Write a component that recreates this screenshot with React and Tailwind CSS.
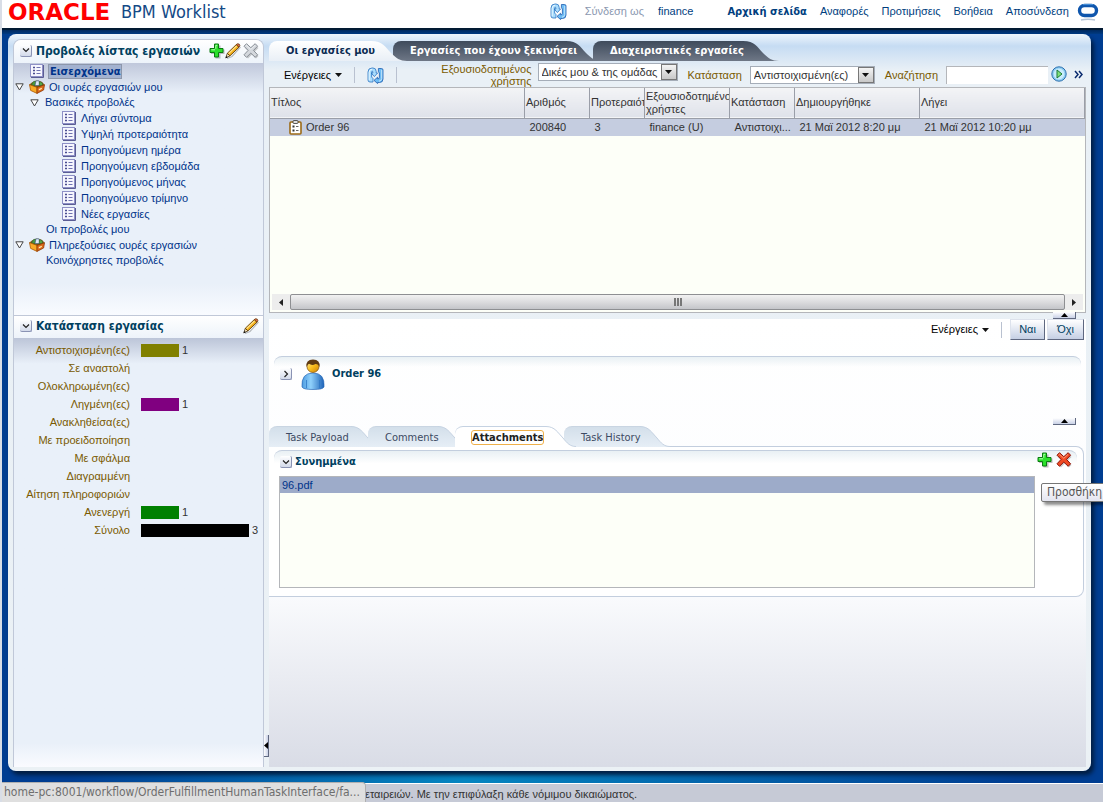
import { useState } from "react";
import clsx from "clsx";

const treeItems = [
  { label: "Λήγει σύντομα" },
  { label: "Υψηλή προτεραιότητα" },
  { label: "Προηγούμενη ημέρα" },
  { label: "Προηγούμενη εβδομάδα" },
  { label: "Προηγούμενος μήνας" },
  { label: "Προηγούμενο τρίμηνο" },
  { label: "Νέες εργασίες" },
];

const statusRows = [
  { label: "Αντιστοιχισμένη(ες)", count: 1, color: "bg-[#808000]" },
  { label: "Σε αναστολή" },
  { label: "Ολοκληρωμένη(ες)" },
  { label: "Ληγμένη(ες)", count: 1, color: "bg-[#800080]" },
  { label: "Ανακληθείσα(ες)" },
  { label: "Με προειδοποίηση" },
  { label: "Με σφάλμα" },
  { label: "Διαγραμμένη" },
  { label: "Αίτηση πληροφοριών" },
  { label: "Ανενεργή", count: 1, color: "bg-[#008000]" },
  { label: "Σύνολο", count: 3, color: "bg-black" },
];

const BAR_WIDTHS = { 1: 38, 3: 108 };

function RefreshIcon() {
  return (
    <svg width="17" height="17" viewBox="0 0 17 17" className="block">
      <path d="M1 13 V5 Q1 1 5 1 H6 Q9.2 1 9.2 4.5 V6 H10.6 L7.4 9.6 L4.2 6 H5.8 V5 Q5.8 4.2 5.2 4.2 Q4.6 4.2 4.6 5.4 V10 L6 11.6 V15 H3 Q1 15 1 13 Z" fill="#a9dcfc" stroke="#2b74c2" strokeWidth="0.8" />
      <path d="M2.2 13.2 V5.2 Q2.4 2.2 5.2 2.2" fill="none" stroke="#e8f7ff" strokeWidth="1" />
      <path d="M11.4 1.5 H14.5 Q16 1.5 16 3 V12 Q16 15.5 12.5 15.5 H10.6 V16.6 L7 13.4 L10.6 10.2 V11.8 Q12.4 12 12.4 10.4 V6 L11.4 4.8 Z" fill="#6dbcf4" stroke="#1d5cae" strokeWidth="0.8" />
      <path d="M14.7 3 V11.6 Q14.5 14 12 14.2" fill="none" stroke="#c4e6fb" strokeWidth="1" />
    </svg>
  );
}

function PlusIcon() {
  return (
    <svg width="16" height="16" viewBox="0 0 16 16">
      <path d="M6.5 2.5 H11.5 V6.5 H15.5 V11 H11.5 V15.5 H6.5 V11 H2 V6.5 H6.5 Z" fill="#000" opacity="0.25" />
      <path d="M5.5 1 H9.5 V5.5 H14 V9.5 H9.5 V14 H5.5 V9.5 H1 V5.5 H5.5 Z" fill="#2be02b" stroke="#0b7a12" strokeWidth="1" />
      <path d="M6.8 5.8 V2.3 H8.3 M2.3 6.8 H6" fill="none" stroke="#b4ffb0" strokeWidth="1" />
    </svg>
  );
}

function PencilIcon() {
  return (
    <svg width="16" height="16" viewBox="0 0 16 16">
      <path d="M2 15.5 L7 13.5 L15.5 4" fill="none" stroke="#000" strokeWidth="1.2" opacity="0.25" />
      <path d="M0.8 14.8 L2.3 10.3 L4.9 12.9 Z" fill="#f7e3b8" stroke="#3a2a10" strokeWidth="0.8" />
      <path d="M2.3 10.3 L11.3 1.6 L14 4.2 L4.9 12.9 Z" fill="#f5b21c" stroke="#5f3b08" strokeWidth="0.9" />
      <path d="M3.6 10.6 L11.6 2.9" stroke="#ffe79a" strokeWidth="1.1" />
      <path d="M11.3 1.6 Q12.6 0 14.3 1.2 Q15.6 2.7 14 4.2 Z" fill="#e2674a" stroke="#5f3b08" strokeWidth="0.8" />
      <path d="M0.6 15.2 L1.3 13 L2.7 14.4 Z" fill="#111" />
    </svg>
  );
}

function CrossIcon({ fill, stroke, light }) {
  return (
    <svg width="16" height="16" viewBox="0 0 16 16">
      <path d="M4 2.5 L8.8 6.5 L13 2.5 L15.5 5 L11.5 9 L15.5 13 L13 15.5 L9 11.5 L5 15.5 L2 13 L6.5 9 L2 5 Z" fill="#000" opacity="0.2" />
      <path d="M3.5 0.7 L7.8 4.7 L12.2 0.7 L14.6 3.2 L10.5 7.4 L14.6 11.8 L12.2 14.3 L7.8 10.1 L3.5 14.3 L1 11.8 L5.1 7.4 L1 3.2 Z" fill={fill} stroke={stroke} strokeWidth="1" />
      <path d="M2.6 3.2 L3.5 2.3 L7.8 6.3 L12 2.4" fill="none" stroke={light} strokeWidth="0.8" />
    </svg>
  );
}

function ViewIcon() {
  return (
    <svg width="14" height="14" viewBox="0 0 14 14" className="shrink-0">
      <rect x="0.5" y="0.5" width="12" height="12" fill="#f6f6fe" stroke="#8e90c6" />
      <path d="M13.5 1 V13.5 H1" fill="none" stroke="#5a5c94" />
      <path d="M3 3.5 H5 M3 6.5 H5 M3 9.5 H5" stroke="#4a4c90" strokeWidth="1.6" />
      <path d="M6.5 3.5 H10.5 M6.5 6.5 H10.5 M6.5 9.5 H10.5" stroke="#6f72b0" />
    </svg>
  );
}

function QueueIcon() {
  return (
    <svg width="16" height="14" viewBox="0 0 16 14" className="shrink-0">
      <path d="M0.6 4.8 L3 2.8 L8 0.8 L13 2.2 L15.4 5 L8 8.4 Z" fill="#7a5a12" stroke="#7a4a08" strokeWidth="0.6" />
      <path d="M2.5 4.6 L4.5 1.6 L6.8 1 L6 6 Z" fill="#4c9a3f" stroke="#2a5a2a" strokeWidth="0.5" />
      <path d="M6 5.5 L7 0.8 L10 0.8 L10.5 5.5 Z" fill="#dfeaf7" stroke="#3a5d86" strokeWidth="0.6" />
      <path d="M10 5.8 L10.8 1.4 L13.4 3 L13.4 5.4 Z" fill="#58a848" stroke="#2a5a2a" strokeWidth="0.5" />
      <path d="M0.5 4.6 L8 7.4 V13.4 L1.6 10.4 Z" fill="#f9ab26" stroke="#a8580a" strokeWidth="0.8" />
      <path d="M8 7.4 L15.5 4.8 L14.6 10 L8 13.4 Z" fill="#dc6a18" stroke="#8f3a08" strokeWidth="0.8" />
      <path d="M9.8 9 L12.8 7.8 V9 L9.8 10.4 Z" fill="#fff0b8" />
    </svg>
  );
}

function TaskIcon() {
  return (
    <svg width="13" height="15" viewBox="0 0 13 15" className="shrink-0">
      <rect x="1" y="2" width="11" height="12" rx="1" fill="#fff" stroke="#9c6a16" strokeWidth="1.6" />
      <rect x="4" y="0.5" width="5" height="3" rx="1" fill="#ddd" stroke="#333" strokeWidth="0.8" />
      <path d="M3.5 6.5 H5.5 M3.5 10.5 H5.5" stroke="#333" strokeWidth="2" />
      <path d="M7 6.5 H9.5 M7 10.5 H9.5" stroke="#666" />
    </svg>
  );
}

function PersonIcon() {
  return (
    <svg width="24" height="31" viewBox="0 0 24 31" className="shrink-0">
      <defs>
        <linearGradient id="body" x1="0" x2="1">
          <stop offset="0" stopColor="#4d9be0" />
          <stop offset="0.4" stopColor="#8fd0fb" />
          <stop offset="1" stopColor="#1e63b8" />
        </linearGradient>
        <linearGradient id="face" x1="0" x2="1" y2="1">
          <stop offset="0" stopColor="#fff0a0" />
          <stop offset="0.5" stopColor="#f9bd1d" />
          <stop offset="1" stopColor="#c97d06" />
        </linearGradient>
      </defs>
      <path d="M1 28 Q0 14 12 14 Q24 14 23 28 Q22 30.5 12 30.5 Q2 30.5 1 28 Z" fill="url(#body)" stroke="#2a6ab8" strokeWidth="0.7" />
      <path d="M5.5 21 V29 M18.5 21 V29" stroke="#2f77c4" strokeWidth="0.8" />
      <circle cx="12" cy="7.5" r="6" fill="url(#face)" stroke="#7a4a08" strokeWidth="0.7" />
      <path d="M5.5 8 Q4.5 0.5 12 0.5 Q19.5 0.5 18.5 8 Q17.5 5 14.5 5 Q11 7 8 4.8 Q6.2 5.5 5.5 8 Z" fill="#5f3a12" />
    </svg>
  );
}

function Disclosure({ open, label }) {
  return (
    <button aria-label={label} className="flex size-[12px] shrink-0 items-center justify-center rounded-xs border-r border-b border-[#8a93b4] bg-linear-to-b from-white to-[#d3daea]">
      <svg width="8" height="8" viewBox="0 0 8 8">
        <path d={open ? "M1 2.5 L4 5.5 L7 2.5" : "M2.5 1 L5.5 4 L2.5 7"} fill="none" stroke="#222" strokeWidth="1.2" />
      </svg>
    </button>
  );
}

function TreeToggle() {
  return (
    <button aria-label="Σύμπτυξη" className="shrink-0">
      <svg width="9" height="8" viewBox="0 0 9 8" className="block">
        <path d="M0.8 0.8 H8.2 L4.5 7 Z" fill="#fff" stroke="#444" />
      </svg>
    </button>
  );
}

function Caret() {
  return (
    <svg width="7" height="4" viewBox="0 0 7 4">
      <path d="M0 0 H7 L3.5 4 Z" fill="#111" />
    </svg>
  );
}

function ActionsMenu() {
  return (
    <button className="flex items-center gap-1 text-black">
      Ενέργειες <Caret />
    </button>
  );
}

function Separator() {
  return <div className="h-4 w-px bg-[#b9c1d0]" />;
}

function CollapseHandle() {
  return (
    <button aria-label="Σύμπτυξη" className="flex h-[7px] w-[23px] items-center justify-center border-r border-b border-[#5f6880] bg-linear-to-b from-white to-[#c9d1e6]">
      <svg width="7" height="4" viewBox="0 0 7 4">
        <path d="M0 4 H7 L3.5 0 Z" fill="#000" />
      </svg>
    </button>
  );
}

function MainTab({ label, active, onClick, className, width }) {
  return (
    <button onClick={onClick} className={clsx("relative flex h-5 items-stretch font-['DejaVu_Sans_Condensed',sans-serif] text-[11px] font-bold whitespace-nowrap", active ? "z-10 text-[#0a2a52]" : "text-white", className)}>
      <span className={clsx("flex items-center rounded-tl-lg pl-[17px]", width, active ? "bg-linear-to-b from-white to-[#e9eff6]" : "bg-linear-to-b from-[#3f4b5c] to-[#6e7786]")}>
        <span className="relative z-10">{label}</span>
      </span>
      <svg width="36" height="20" viewBox="0 0 36 20" className="shrink-0">
        <defs>
          <linearGradient id={active ? "tabOn" : "tabOff"} x1="0" x2="0" y1="0" y2="1">
            <stop offset="0" stopColor={active ? "#ffffff" : "#3f4b5c"} />
            <stop offset="1" stopColor={active ? "#e9eff6" : "#6e7786"} />
          </linearGradient>
        </defs>
        <path d="M0 0 C12 0 14 6 20 12 C25 17 29 20 36 20 H0 Z" fill={active ? "url(#tabOn)" : "url(#tabOff)"} />
      </svg>
    </button>
  );
}

function SubTab({ label, active, onClick, className, width }) {
  return (
    <button onClick={onClick} className={clsx("relative flex h-[21px] items-stretch font-['DejaVu_Sans_Condensed',sans-serif] text-[11px] whitespace-nowrap", active ? "z-10 font-bold text-[#222]" : "text-[#3d4a63]", className)}>
      <span className={clsx("flex items-center rounded-tl-lg border-t pl-[17px]", width, active ? "border-[#c5d2e2] bg-white" : "border-[#c9d5e2] bg-linear-to-b from-[#d3dfea] to-[#e6eef6]")}>
        <span className={clsx("relative z-10 leading-[13px]", active && "rounded-xs outline-1 outline-[#eeb04a]")}>{label}</span>
      </span>
      <svg width="30" height="21" viewBox="0 0 30 21" className="shrink-0">
        <defs>
          <linearGradient id="subOff" x1="0" x2="0" y1="0" y2="1">
            <stop offset="0" stopColor="#d3dfea" />
            <stop offset="1" stopColor="#e6eef6" />
          </linearGradient>
        </defs>
        <path d="M0 0.5 C9 0.5 12 7 17 12 C21 17 24 20.5 30 20.5 L30 21 H0 Z" fill={active ? "#fff" : "url(#subOff)"} />
        <path d="M0 0.5 C9 0.5 12 7 17 12 C21 17 24 20.5 30 20.5" fill="none" stroke="#c5d2e2" />
      </svg>
    </button>
  );
}

function Select({ id, value, className }) {
  return (
    <div className={clsx("relative h-[18px] border border-[#a5adb8] bg-white", className)}>
      <select id={id} className="block h-full w-full appearance-none pl-[3px] text-[11px] leading-4 text-[#333]">
        <option>{value}</option>
      </select>
      <span className="pointer-events-none absolute inset-y-0 right-0 flex w-4 items-center justify-center border border-[#777] bg-linear-to-b from-[#f4f4f4] to-[#c8c8c8]">
        <Caret />
      </span>
    </div>
  );
}

function Sidebar() {
  return (
    <aside className="flex w-[251px] shrink-0 flex-col overflow-hidden rounded-t-lg border-x border-t border-[#c0c8d8] bg-[#e9f0f9]">
      <div className="flex h-[23px] items-center bg-linear-to-b from-white to-[#edf3fa] pr-1 pb-0.5 pl-1.5">
        <Disclosure open label="Προβολές" />
        <h2 className="ml-1 flex-1 font-['DejaVu_Sans_Condensed',sans-serif] text-[12px] font-bold whitespace-nowrap text-[#00405f]">Προβολές λίστας εργασιών</h2>
        <button aria-label="Προσθήκη προβολής"><PlusIcon /></button>
        <button aria-label="Επεξεργασία προβολής"><PencilIcon /></button>
        <button aria-label="Διαγραφή προβολής" className="ml-0.5"><CrossIcon fill="#d4d8dd" stroke="#888e96" light="#f4f6f8" /></button>
      </div>
      <nav className="flex h-[252px] flex-col bg-linear-to-b from-[#c0c8db] via-[#e9f0f9] via-12% to-[#e9f0f9] text-[#00338a]">
        <a href="#inbox" className="flex h-4 items-center gap-1 pl-4 font-['DejaVu_Sans_Condensed',sans-serif] font-bold">
          <ViewIcon />
          <span className="border border-[#8d97ab] bg-[#a3b2d0] px-px leading-[13px]">Εισερχόμενα</span>
        </a>
        <div className="flex h-4 items-center gap-1 pl-px">
          <TreeToggle />
          <span className="ml-px"><QueueIcon /></span>
          <a href="#queues">Οι ουρές εργασιών μου</a>
        </div>
        <div className="flex h-[15px] items-center gap-1.5 pl-4">
          <TreeToggle />
          <a href="#standard">Βασικές προβολές</a>
        </div>
        {treeItems.map((item) => (
          <a key={item.label} href="#view" className="flex h-4 items-center gap-1 pl-12">
            <ViewIcon />
            <span className="ml-px">{item.label}</span>
          </a>
        ))}
        <a href="#mine" className="flex h-[15px] items-center pl-8">Οι προβολές μου</a>
        <div className="flex h-4 items-center gap-1 pl-px">
          <TreeToggle />
          <span className="ml-px"><QueueIcon /></span>
          <a href="#proxy">Πληρεξούσιες ουρές εργασιών</a>
        </div>
        <a href="#shared" className="flex h-[15px] items-center pl-8">Κοινόχρηστες προβολές</a>
        <div className="mt-4 flex-1 bg-linear-to-b from-[#e9f0f9] to-[#f9fbff]" />
      </nav>
      <div className="flex h-[23px] items-center border-t border-[#c0c8d8] bg-linear-to-b from-white to-[#edf3fa] pr-1 pb-0.5 pl-1.5">
        <Disclosure open label="Κατάσταση" />
        <h2 className="ml-1 flex-1 font-['DejaVu_Sans_Condensed',sans-serif] text-[12px] font-bold text-[#00405f]">Κατάσταση εργασίας</h2>
        <button aria-label="Επεξεργασία κατάστασης"><PencilIcon /></button>
      </div>
      <div className="flex flex-1 flex-col bg-linear-to-b from-[#bcc5d8] via-[#e9f0f9] via-6% to-[#e9f0f9] pt-[3px]">
        {statusRows.map((row) => (
          <div key={row.label} className="flex h-[18px] items-center">
            <span className="w-[116px] shrink-0 text-right whitespace-nowrap text-[#7a5a00]">{row.label}</span>
            {row.count && (
              <>
                <span className={clsx("ml-[11px] h-[13px]", row.color)} style={{ width: BAR_WIDTHS[row.count] }} />
                <span className="ml-[3px] text-[#333]">{row.count}</span>
              </>
            )}
          </div>
        ))}
        <div className="flex-1" />
        <div className="h-6 bg-linear-to-b from-[#e9f0f9] to-[#fafbff]" />
      </div>
    </aside>
  );
}

function TaskTable() {
  const th = "border-r border-[#9a9ea8] px-px text-left font-normal leading-[13px] overflow-hidden";
  return (
    <div className="flex h-[226px] flex-col border border-[#b4b6ba] bg-[#fdfff8] text-[#333]">
      <table className="w-full table-fixed border-collapse">
        <colgroup>
          <col />
          <col className="w-[65px]" />
          <col className="w-[55px]" />
          <col className="w-[85px]" />
          <col className="w-[65px]" />
          <col className="w-[125px]" />
          <col className="w-[165px]" />
        </colgroup>
        <thead>
          <tr className="h-[30px] border-b border-[#9a9ea8] bg-linear-to-b from-[#f3f4f6] to-[#dfe2ea]">
            <th className={th}>Τίτλος</th>
            <th className={th}>Αριθμός</th>
            <th className={th}>Προτεραιότ</th>
            <th className={th}>Εξουσιοδοτημένο χρήστες</th>
            <th className={th}>Κατάσταση</th>
            <th className={th}>Δημιουργήθηκε</th>
            <th className={th}>Λήγει</th>
          </tr>
        </thead>
        <tbody>
          <tr className="h-[18px] bg-[#c5cde0] whitespace-nowrap">
            <td>
              <span className="flex items-center gap-1 pl-[19px]"><TaskIcon /> Order 96</span>
            </td>
            <td className="pl-[5px]">200840</td>
            <td className="pl-[5px]">3</td>
            <td className="pl-[5px]">finance (U)</td>
            <td className="pl-[5px]">Αντιστοιχι...</td>
            <td className="pl-[5px]">21 Μαϊ 2012 8:20 μμ</td>
            <td className="pl-[5px]">21 Μαϊ 2012 10:20 μμ</td>
          </tr>
        </tbody>
      </table>
      <div className="mx-0.5 mt-auto mb-0.5 flex h-4 items-stretch bg-[#ededed]">
        <span className="flex w-[18px] items-center justify-center">
          <svg width="4" height="7" viewBox="0 0 4 7"><path d="M4 0 V7 L0 3.5 Z" fill="#222" /></svg>
        </span>
        <div className="flex flex-1 items-center justify-center gap-px rounded-xs border border-[#8e8f92] bg-linear-to-b from-[#f2f2f2] via-[#dcdcde] to-[#c4c5c9]">
          <span className="h-2 w-0.5 bg-[#777]" />
          <span className="h-2 w-0.5 bg-[#777]" />
          <span className="h-2 w-0.5 bg-[#777]" />
        </div>
        <span className="flex w-[18px] items-center justify-center">
          <svg width="4" height="7" viewBox="0 0 4 7"><path d="M0 0 V7 L4 3.5 Z" fill="#222" /></svg>
        </span>
      </div>
    </div>
  );
}

function TaskDetails() {
  const [tab, setTab] = useState("attachments");
  const actionBtn = "h-[21px] border-t border-l border-r border-b border-t-[#dde2ec] border-l-[#dde2ec] border-r-[#5f6880] border-b-[#5f6880] bg-linear-to-b from-white to-[#c5cfe4] text-[#00405f]";

  return (
    <section className="mt-1 flex flex-1 flex-col bg-linear-to-b from-white via-[#fbfcfe] via-60% to-[#d9dce6]">
      <div className="flex h-[21px] items-center justify-end gap-3 pr-0.5">
        <ActionsMenu />
        <Separator />
        <div className="-ml-1 flex gap-0.5">
          <button className={clsx(actionBtn, "w-[35px]")}>Ναι</button>
          <button className={clsx(actionBtn, "w-[37px]")}>Όχι</button>
        </div>
      </div>

      <div className="mt-4 mr-[5px] ml-[5px] rounded-t-lg border-t border-[#c3cede] bg-linear-to-b from-[#e9f0f4] to-transparent to-30% pt-px">
        <div className="flex h-8 items-center pl-1.5">
          <Disclosure label="Λεπτομέρειες" />
          <span className="ml-[9px]"><PersonIcon /></span>
          <h3 className="ml-[7px] font-['DejaVu_Sans_Condensed',sans-serif] text-[11px] font-bold text-[#00405f]">Order 96</h3>
        </div>
      </div>
      <div className="mt-7 flex justify-end pr-2.5"><CollapseHandle /></div>

      <div className="mt-px flex">
        <SubTab label="Task Payload" width="w-[82px]" active={tab === "payload"} onClick={() => setTab("payload")} />
        <SubTab label="Comments" width="w-[70px]" className="-ml-[13px]" active={tab === "comments"} onClick={() => setTab("comments")} />
        <SubTab label="Attachments" width="w-[91px]" className="-ml-[13px]" active={tab === "attachments"} onClick={() => setTab("attachments")} />
        <SubTab label="Task History" width="w-[76px]" className="-ml-[12px]" active={tab === "history"} onClick={() => setTab("history")} />
      </div>

      <div className="-mt-px mr-0.5 rounded-tr-lg rounded-br-lg border-t border-r border-b border-[#c3cede] bg-white pt-[3px] pr-1.5 pb-2 pl-[5px]">
        <div className="flex h-[26px] items-start rounded-t-lg border-t border-[#c3cede] bg-linear-to-b from-[#e9f0f4] to-white to-50% pt-px pr-[5px] pl-1.5">
          <span className="mt-1"><Disclosure open label="Συνημμένα" /></span>
          <h3 className="mt-0.5 ml-[3px] flex-1 font-['DejaVu_Sans_Condensed',sans-serif] text-[11px] font-bold text-[#00405f]">Συνημμένα</h3>
          <div className="relative flex gap-[3px]">
            <button aria-label="Προσθήκη"><PlusIcon /></button>
            <button aria-label="Διαγραφή"><CrossIcon fill="#f04a24" stroke="#8c1206" light="#ffb08a" /></button>
            <span role="tooltip" className="absolute top-[31px] left-1 z-20 rounded-xs border border-[#767676] bg-linear-to-b from-white to-[#e4e5f0] px-[5px] font-['DejaVu_Sans_Condensed',sans-serif] text-[12px] leading-[17px] text-[#575757] shadow-[3px_3px_3px_rgba(0,0,0,0.45)]">
              Προσθήκη
            </span>
          </div>
        </div>
        <ul className="mr-[42px] ml-[5px] h-[112px] border border-[#b4b6ba] bg-[#fdfff8]">
          <li className="h-4 bg-[#9dabc9] pl-0.5 leading-4">
            <a href="#96" className="text-[#00338a]">96.pdf</a>
          </li>
        </ul>
      </div>
    </section>
  );
}

export default function App() {
  const [mainTab, setMainTab] = useState("mine");

  return (
    <div className="relative flex min-h-screen flex-col overflow-hidden border-l-2 border-[#d8dde6] bg-[#003d91] font-['Liberation_Sans',Arial,sans-serif] text-[11px]">
      <header className="flex h-[30px] items-start border-b-2 border-[#021a33] bg-white pr-1 pl-[6px] text-[#003e7e]">
        <span className="w-[106px] font-['DejaVu_Sans',sans-serif] text-[23px] leading-6 font-bold text-[#f00]">ORACLE</span>
        <span className="ml-[7px] font-['DejaVu_Sans_Condensed',sans-serif] text-[18px] leading-6 text-[#154a86]">BPM Worklist</span>
        <div className="ml-auto flex h-[23px] items-center whitespace-nowrap">
          <button aria-label="Ανανέωση"><RefreshIcon /></button>
          <span className="ml-[18px] text-[#8b98b0]">Σύνδεση ως</span>
          <span className="ml-[14px]">finance</span>
          <nav className="ml-[34px] flex items-baseline gap-[13px]">
            <a href="#home" className="font-['DejaVu_Sans_Condensed',sans-serif] font-bold">Αρχική σελίδα</a>
            <a href="#reports">Αναφορές</a>
            <a href="#preferences">Προτιμήσεις</a>
            <a href="#help">Βοήθεια</a>
            <a href="#logout">Αποσύνδεση</a>
          </nav>
          <svg width="22" height="22" viewBox="0 0 22 22" className="ml-2">
            <rect x="2.5" y="4.5" width="17" height="10" rx="5" fill="none" stroke="#0f56ad" strokeWidth="3.4" />
            <path d="M6 3.6 H16" stroke="#4a94dc" strokeWidth="1" />
            <path d="M4 19 Q11 17.5 18 19" fill="none" stroke="#b8c6d8" strokeWidth="1.5" />
          </svg>
        </div>
      </header>

      <main className="flex flex-1 bg-[linear-gradient(to_bottom,#00295e,#003a82_4px,transparent_4px),linear-gradient(to_right,#003d91_6%,#0585c0_42%,#003d91_92%)] pt-1 pr-3 pb-3 pl-1.5">
        <div className="flex min-w-0 flex-1 rounded-lg bg-[linear-gradient(to_bottom,#eef5fc,#c6dcf3_12px,#e9f0f6_36px,#ebf1f5)] px-[5px] pt-[5px] pb-1 shadow-[3px_4px_4px_#001d42]">
          <Sidebar />
          <div className="flex w-[5px] shrink-0 items-end pb-[10px]">
            <button aria-label="Σύμπτυξη πλαισίου" className="flex h-[22px] w-[5px] items-center border-r border-b border-[#5f6880] bg-linear-to-r from-white to-[#c9d1e6]">
              <svg width="4" height="7" viewBox="0 0 4 7"><path d="M4 0 V7 L0 3.5 Z" fill="#000" /></svg>
            </button>
          </div>
          <div className="flex min-w-0 flex-1 flex-col">
            <div className="mt-[2px] flex">
              <MainTab label="Οι εργασίες μου" width="w-[102px]" active={mainTab === "mine"} onClick={() => setMainTab("mine")} />
              <MainTab label="Εργασίες που έχουν ξεκινήσει" width="w-[173px]" className="-ml-[14px]" active={mainTab === "started"} onClick={() => setMainTab("started")} />
              <MainTab label="Διαχειριστικές εργασίες" width="w-[150px]" className="-ml-[9px]" active={mainTab === "admin"} onClick={() => setMainTab("admin")} />
            </div>

            <div className="flex h-[26px] items-start pt-0.5">
              <div className="flex h-6 items-center gap-3 pl-[15px]">
                <ActionsMenu />
                <Separator />
                <button aria-label="Ανανέωση λίστας"><RefreshIcon /></button>
                <Separator />
              </div>
              <div className="ml-auto flex items-start text-[#7a5a00]">
                <label htmlFor="assignee" className="w-[96px] text-right leading-3">Εξουσιοδοτημένος χρήστης</label>
                <Select id="assignee" value="Δικές μου & της ομάδας" className="ml-1.5 w-[140px]" />
                <label htmlFor="state" className="ml-2.5 leading-6">Κατάσταση</label>
                <Select id="state" value="Αντιστοιχισμένη(ες)" className="mt-[3px] ml-2 w-[125px]" />
                <label htmlFor="search" className="ml-2.5 leading-6">Αναζήτηση</label>
                <input id="search" className="mt-[3px] ml-2 h-[18px] w-[102px] border-t border-l border-[#b4b6ba] bg-white" />
                <button aria-label="Αναζήτηση εργασιών" className="mt-[3px] ml-[3px]">
                  <svg width="16" height="16" viewBox="0 0 16 16">
                    <circle cx="8" cy="8" r="7.2" fill="#8fcdf3" stroke="#2a6fae" />
                    <circle cx="8" cy="8" r="5.4" fill="#c9ecfb" />
                    <path d="M6 4 L11 8 L6 12 Z" fill="#7fe07a" stroke="#1c7a3a" />
                  </svg>
                </button>
                <button aria-label="Περισσότερα" className="mt-[7px] mr-[3px] ml-[7px]">
                  <svg width="9" height="9" viewBox="0 0 9 9">
                    <path d="M1 1 L4 4.5 L1 8 M5 1 L8 4.5 L5 8" fill="none" stroke="#0a2a6e" strokeWidth="1.5" />
                  </svg>
                </button>
              </div>
            </div>

            <TaskTable />
            <div className="-mt-px flex h-[7px] justify-end pr-2.5"><CollapseHandle /></div>
            <div className="-mt-1 flex flex-1 flex-col"><TaskDetails /></div>
          </div>
        </div>
      </main>

      <footer className="flex h-[19px] items-end border-t border-white bg-[#c6cad6] pl-[363px] text-[#333]">
        εταιρειών. Με την επιφύλαξη κάθε νόμιμου δικαιώματος.
      </footer>
      <div className="absolute bottom-0 left-0 z-30 h-5 w-[364px] truncate rounded-tr-sm border-t border-r border-[#b0b0b0] bg-[#dfdfdf] pl-0.5 font-['DejaVu_Sans_Condensed',sans-serif] text-[12px] leading-[18px] text-[#6e6e6e]">
        home-pc:8001/workflow/OrderFulfillmentHumanTaskInterface/fa...
      </div>
    </div>
  );
}
